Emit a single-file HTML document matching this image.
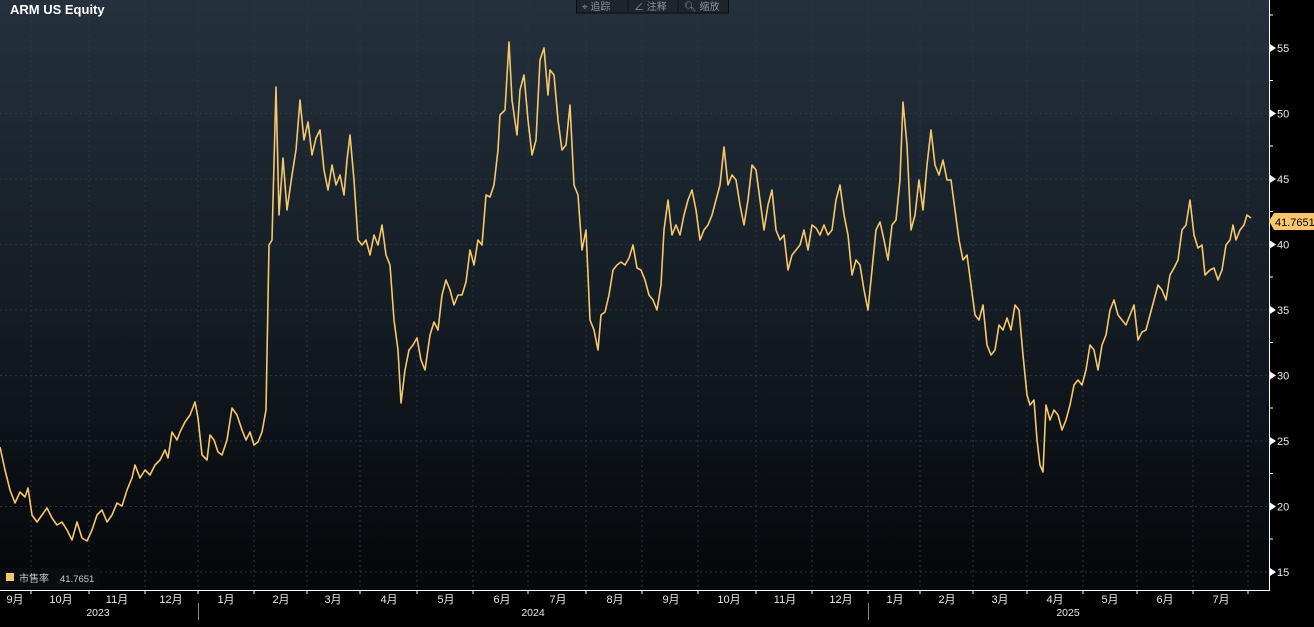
<!DOCTYPE html>
<html><head><meta charset="utf-8"><style>
html,body{margin:0;padding:0;background:#000;width:1314px;height:627px;overflow:hidden}
svg{display:block}
text{font-family:"Liberation Sans","Noto Sans CJK SC",sans-serif}
</style></head><body>
<svg width="1314" height="627" viewBox="0 0 1314 627" xmlns="http://www.w3.org/2000/svg">
<defs>
<linearGradient id="bg" x1="0" y1="0" x2="0" y2="1">
<stop offset="0" stop-color="#24313d"/>
<stop offset="0.5" stop-color="#151d25"/>
<stop offset="1" stop-color="#05070a"/>
</linearGradient>
</defs>
<rect x="0" y="0" width="1314" height="627" fill="#000"/>
<rect x="0" y="0" width="1269" height="590" fill="url(#bg)"/>
<g stroke="#2c3640" stroke-width="1" stroke-dasharray="2,3">
<line x1="0" y1="48" x2="1269" y2="48"/>
<line x1="0" y1="113.5" x2="1269" y2="113.5"/>
<line x1="0" y1="179" x2="1269" y2="179"/>
<line x1="0" y1="244.5" x2="1269" y2="244.5"/>
<line x1="0" y1="310" x2="1269" y2="310"/>
<line x1="0" y1="375.5" x2="1269" y2="375.5"/>
<line x1="0" y1="441" x2="1269" y2="441"/>
<line x1="0" y1="506.5" x2="1269" y2="506.5"/>
<line x1="0" y1="572" x2="1269" y2="572"/>
<line x1="31" y1="0" x2="31" y2="590"/><line x1="89" y1="0" x2="89" y2="590"/><line x1="145" y1="0" x2="145" y2="590"/><line x1="198" y1="0" x2="198" y2="590"/><line x1="254" y1="0" x2="254" y2="590"/><line x1="307" y1="0" x2="307" y2="590"/><line x1="360" y1="0" x2="360" y2="590"/><line x1="417" y1="0" x2="417" y2="590"/><line x1="473" y1="0" x2="473" y2="590"/><line x1="528" y1="0" x2="528" y2="590"/><line x1="586" y1="0" x2="586" y2="590"/><line x1="642" y1="0" x2="642" y2="590"/><line x1="698" y1="0" x2="698" y2="590"/><line x1="756" y1="0" x2="756" y2="590"/><line x1="812" y1="0" x2="812" y2="590"/><line x1="868" y1="0" x2="868" y2="590"/><line x1="920" y1="0" x2="920" y2="590"/><line x1="973" y1="0" x2="973" y2="590"/><line x1="1027" y1="0" x2="1027" y2="590"/><line x1="1083" y1="0" x2="1083" y2="590"/><line x1="1137" y1="0" x2="1137" y2="590"/><line x1="1193" y1="0" x2="1193" y2="590"/><line x1="1248" y1="0" x2="1248" y2="590"/>
</g>
<polyline fill="none" stroke="#f5c86a" stroke-width="1.6" stroke-linejoin="round" points="0,447 5,470 10,490 15,503 20,492 25,497 28,488 32,515 37,522 42,515 47,508 52,518 57,525 62,522 67,530 72,540 77,522 82,538 87,541 92,530 97,515 102,510 107,522 112,515 117,503 122,506 127,490 132,478 135,465 140,478 145,470 150,475 155,465 160,460 165,450 168,458 172,432 177,440 180,432 185,422 190,415 195,402 198,418 202,455 207,460 210,435 214,440 218,452 222,455 227,440 232,408 237,415 242,430 246,440 250,432 254,445 258,442 262,432 266,410 269,245 272,240 276,87 279,215 283,158 287,210 292,175 296,150 300,100 304,140 308,122 312,155 316,138 320,130 324,170 328,190 332,165 336,185 340,175 344,195 347,160 350,135 354,180 358,240 362,245 366,240 370,255 374,235 378,245 382,225 386,255 390,265 394,320 398,350 401,403 405,370 409,350 413,345 417,338 421,360 425,370 430,335 434,322 438,330 442,295 446,280 450,290 454,305 458,295 462,295 466,282 470,250 474,265 478,240 482,245 486,195 490,197 494,185 498,150 500,115 505,110 509,42 512,100 517,135 520,90 524,75 528,120 532,155 536,140 540,60 544,48 548,95 550,70 554,75 558,120 562,150 566,145 570,105 574,185 578,195 582,250 586,230 590,320 594,330 598,350 601,315 605,312 609,295 613,270 617,265 621,262 625,265 629,258 633,245 637,268 641,270 645,280 649,295 653,300 657,310 661,285 664,230 668,200 672,235 676,225 680,235 684,215 688,200 692,190 696,210 700,240 704,230 708,225 712,215 716,200 720,185 724,147 728,185 732,175 736,180 740,205 744,225 748,200 752,165 756,170 760,200 764,230 768,205 772,190 776,230 780,240 784,235 788,270 792,255 796,250 800,245 804,230 808,250 812,225 816,228 820,235 824,225 828,235 832,230 836,200 840,185 844,215 848,235 852,275 856,260 860,265 864,290 868,310 872,270 876,230 880,222 884,240 888,260 892,225 896,220 900,180 903,102 907,145 911,230 915,215 919,180 923,210 927,165 931,130 935,165 939,175 943,160 947,180 951,180 955,210 959,240 963,260 967,255 971,285 975,315 979,320 983,305 987,345 991,355 995,350 999,325 1003,330 1007,318 1011,330 1015,305 1019,310 1023,355 1027,395 1030,405 1034,400 1037,440 1040,465 1043,472 1046,405 1050,420 1054,410 1058,415 1062,430 1066,420 1070,405 1074,385 1078,380 1082,385 1086,370 1090,345 1094,350 1098,370 1102,345 1106,335 1110,310 1114,300 1118,315 1122,320 1126,325 1130,315 1134,305 1138,340 1142,332 1146,330 1150,315 1154,300 1158,285 1162,290 1166,300 1170,275 1174,268 1178,260 1182,230 1186,225 1190,200 1194,235 1198,248 1202,245 1205,275 1210,270 1214,268 1218,280 1222,270 1226,245 1230,240 1233,225 1236,240 1240,230 1244,225 1247,215 1251,218"/>
<text x="10" y="14" fill="#fff" font-size="13" font-weight="bold">ARM US Equity</text>
<rect x="576.5" y="-1" width="152" height="14" fill="#1e262d" stroke="#0a0d10"/>
<line x1="628" y1="0" x2="628" y2="12" stroke="#0d1115"/><line x1="678" y1="0" x2="678" y2="12" stroke="#0d1115"/>
<text x="582" y="10" fill="#8a949c" font-size="10">⌖ 追踪</text>
<text x="634" y="10" fill="#8a949c" font-size="10">∠ 注释</text>
<text x="684" y="10" fill="#8a949c" font-size="10">🔍︎ 缩放</text>
<rect x="0" y="568" width="100" height="20" fill="#0b0e11" opacity="0.8"/>
<rect x="6" y="573" width="8" height="8" fill="#f9c66d"/>
<text x="19" y="582" fill="#c8c8c8" font-size="10">市售率</text>
<text x="60" y="582" fill="#c8c8c8" font-size="9.5">41.7651</text>
<line x1="0" y1="590.5" x2="1270" y2="590.5" stroke="#fff"/>
<line x1="1269.5" y1="0" x2="1269.5" y2="591" stroke="#fff"/>
<g fill="#fff">
<path d="M1270 44l6 4l-6 4z"/><path d="M1270 109.5l6 4l-6 4z"/><path d="M1270 175l6 4l-6 4z"/><path d="M1270 240.5l6 4l-6 4z"/><path d="M1270 306l6 4l-6 4z"/><path d="M1270 371.5l6 4l-6 4z"/><path d="M1270 437l6 4l-6 4z"/><path d="M1270 502.5l6 4l-6 4z"/><path d="M1270 568l6 4l-6 4z"/>
</g>
<g stroke="#fff"><line x1="1270" y1="15" x2="1273" y2="15"/><line x1="1270" y1="80.5" x2="1273" y2="80.5"/><line x1="1270" y1="146" x2="1273" y2="146"/><line x1="1270" y1="211.5" x2="1273" y2="211.5"/><line x1="1270" y1="277" x2="1273" y2="277"/><line x1="1270" y1="342.5" x2="1273" y2="342.5"/><line x1="1270" y1="408" x2="1273" y2="408"/><line x1="1270" y1="473.5" x2="1273" y2="473.5"/><line x1="1270" y1="539" x2="1273" y2="539"/></g>
<g fill="#e8e8e8" font-size="11">
<text x="1277" y="52">55</text><text x="1277" y="117.5">50</text><text x="1277" y="183">45</text><text x="1277" y="248.5">40</text><text x="1277" y="314">35</text><text x="1277" y="379.5">30</text><text x="1277" y="445">25</text><text x="1277" y="510.5">20</text><text x="1277" y="576">15</text>
</g>
<path d="M1269 221l5-8h42v17h-42z" fill="#f9c66d"/>
<text x="1275" y="226" fill="#000" font-size="11">41.7651</text>
<g stroke="#fff"><line x1="31" y1="591" x2="31" y2="594"/><line x1="89" y1="591" x2="89" y2="594"/><line x1="145" y1="591" x2="145" y2="594"/><line x1="198" y1="591" x2="198" y2="594"/><line x1="254" y1="591" x2="254" y2="594"/><line x1="307" y1="591" x2="307" y2="594"/><line x1="360" y1="591" x2="360" y2="594"/><line x1="417" y1="591" x2="417" y2="594"/><line x1="473" y1="591" x2="473" y2="594"/><line x1="528" y1="591" x2="528" y2="594"/><line x1="586" y1="591" x2="586" y2="594"/><line x1="642" y1="591" x2="642" y2="594"/><line x1="698" y1="591" x2="698" y2="594"/><line x1="756" y1="591" x2="756" y2="594"/><line x1="812" y1="591" x2="812" y2="594"/><line x1="868" y1="591" x2="868" y2="594"/><line x1="920" y1="591" x2="920" y2="594"/><line x1="973" y1="591" x2="973" y2="594"/><line x1="1027" y1="591" x2="1027" y2="594"/><line x1="1083" y1="591" x2="1083" y2="594"/><line x1="1137" y1="591" x2="1137" y2="594"/><line x1="1193" y1="591" x2="1193" y2="594"/><line x1="1248" y1="591" x2="1248" y2="594"/></g>
<g stroke="#888"><line x1="198.5" y1="603" x2="198.5" y2="620"/><line x1="868.5" y1="603" x2="868.5" y2="620"/></g>
<g fill="#e8e8e8" font-size="11" text-anchor="middle">
<text x="15" y="603">9月</text><text x="61" y="603">10月</text><text x="117" y="603">11月</text><text x="171" y="603">12月</text><text x="226" y="603">1月</text><text x="281" y="603">2月</text><text x="333" y="603">3月</text><text x="389" y="603">4月</text><text x="446" y="603">5月</text><text x="502" y="603">6月</text><text x="558" y="603">7月</text><text x="615" y="603">8月</text><text x="671" y="603">9月</text><text x="729" y="603">10月</text><text x="785" y="603">11月</text><text x="841" y="603">12月</text><text x="895" y="603">1月</text><text x="947" y="603">2月</text><text x="1000" y="603">3月</text><text x="1055" y="603">4月</text><text x="1110" y="603">5月</text><text x="1165" y="603">6月</text><text x="1221" y="603">7月</text>
<text x="98" y="616" font-size="10.5">2023</text><text x="533" y="616" font-size="10.5">2024</text><text x="1068" y="616" font-size="10.5">2025</text>
</g>
</svg>
</body></html>
